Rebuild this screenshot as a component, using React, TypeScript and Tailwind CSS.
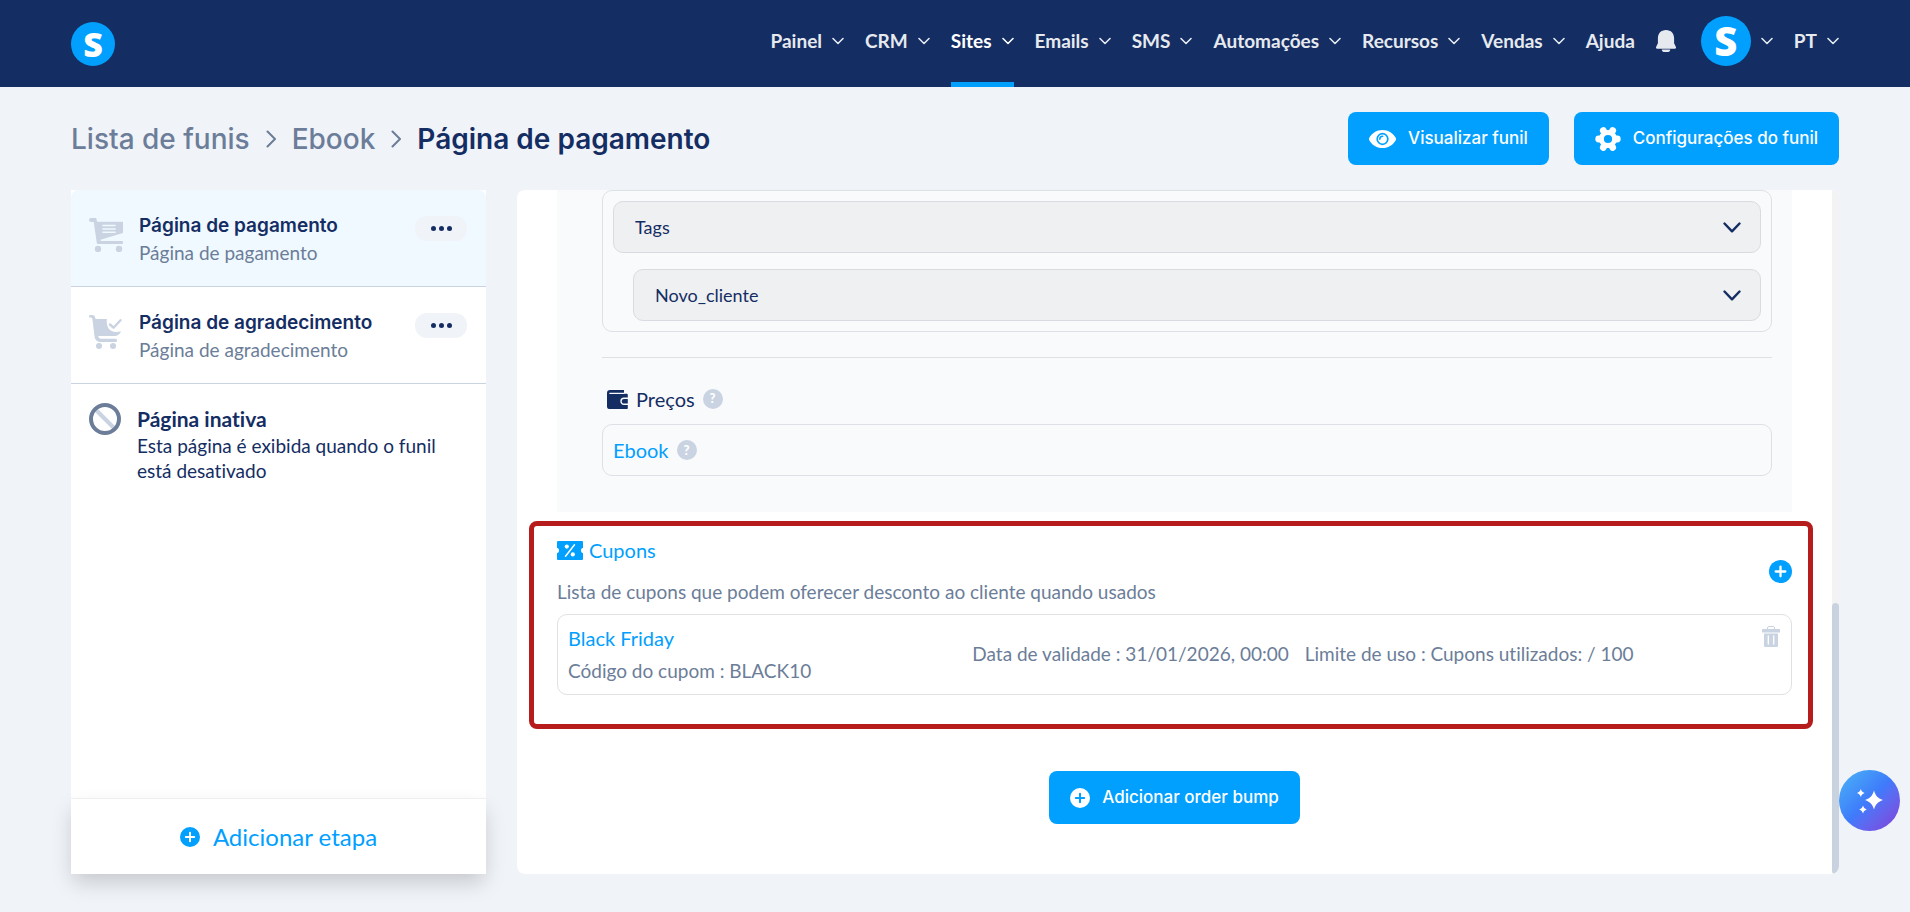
import { ReactNode } from "react"

interface IconProps {
    className? : string
}

interface NavItem {
    label : string,
    active? : boolean
}

interface StepItem {
    title : string,
    subtitle : string,
    icon : ReactNode,
    selected? : boolean
}

const navItems : NavItem[] = [
    { label: "Painel" },
    { label: "CRM" },
    { label: "Sites", active: true },
    { label: "Emails" },
    { label: "SMS" },
    { label: "Automações" },
    { label: "Recursos" },
    { label: "Vendas" },
]

const ChevronDown = ({ className } : IconProps) => (
    <svg viewBox="0 0 12 8" className={className} fill="none" stroke="currentColor" strokeWidth="1.6" strokeLinecap="round" strokeLinejoin="round">
        <path d="M1 1.5 6 6.5 11 1.5" />
    </svg>
)

const ChevronRight = () => (
    <svg viewBox="0 0 10 18" className="h-[18px] w-[10px]" fill="none" stroke="currentColor" strokeWidth="2" strokeLinecap="round" strokeLinejoin="round">
        <path d="M1.5 1.5 9 9 1.5 16.5" />
    </svg>
)

const BellIcon = () => (
    <svg viewBox="0 0 20 22" className="h-[22px] w-5" fill="currentColor">
        <path d="M10 0C5 0 1.9 3.6 1.9 8v5.2L.3 16.4c-.7 1.4-.3 2.3 1 2.3h17.4c1.3 0 1.7-.9 1-2.3l-1.6-3.2V8C18.1 3.6 15 0 10 0Z" />
        <path d="M5.8 19.6h8.4c0 1.5-.9 2.4-2 2.4H7.8c-1.1 0-2-.9-2-2.4Z" />
    </svg>
)

const EyeIcon = () => (
    <svg viewBox="0 0 27 18" className="h-[18px] w-[27px]">
        <path d="M13.5 0C7.5 0 2.6 3.4.3 7.8a2.4 2.4 0 0 0 0 2.4C2.6 14.6 7.5 18 13.5 18s10.9-3.4 13.2-7.8a2.4 2.4 0 0 0 0-2.4C24.4 3.4 19.5 0 13.5 0Z" fill="#fff" />
        <circle cx="13.5" cy="9" r="5.3" fill="none" stroke="#01a0ff" strokeWidth="1.7" />
        <path d="M10.8 9.2a2.9 2.9 0 0 1 2.9-2.9" fill="none" stroke="#01a0ff" strokeWidth="1.5" strokeLinecap="round" />
    </svg>
)

const GearIcon = () => (
    <svg viewBox="0 0 26 26" className="size-[26px]" fill="none" stroke="currentColor">
        <circle cx="13" cy="13" r="6.6" strokeWidth="5" />
        <g strokeWidth="6.8" strokeLinecap="round">
            <path d="M3.7 13h1M21.3 13h1" />
            <path d="M8.3 4.5l.5 1M17.2 20.5l.5 1" />
            <path d="M17.7 4.5l-.5 1M8.8 20.5l-.5 1" />
        </g>
    </svg>
)

const PlusCircle = ({ className } : IconProps) => (
    <svg viewBox="0 0 20 20" className={className}>
        <circle cx="10" cy="10" r="10" fill="currentColor" stroke="none" />
        <path d="M10 5.8v8.4M5.8 10h8.4" strokeWidth="2" strokeLinecap="round" />
    </svg>
)

const CartListIcon = () => (
    <svg viewBox="0 0 34 34" className="size-[34px]" fill="#c9d3e1">
        <path d="M2 0h5.2l.9 3.8H34V15L11.5 21.8l.3 1.2h21a1.5 1.5 0 0 1 0 3H9.5c-1 0-1.7-.5-1.8-1.5L4.8 4H2a2 2 0 0 1 0-4Z" />
        <circle cx="9" cy="31" r="3.2" />
        <circle cx="30" cy="31" r="3.2" />
        <path d="M14 7.5h12M14 11h12M14 14.3h12" stroke="#f0f9ff" strokeWidth="1.6" strokeLinecap="round" />
    </svg>
)

const CartCheckIcon = () => (
    <svg viewBox="0 0 34 34" className="size-[34px]" fill="#c9d3e1">
        <path d="M1.2 0H3c1.8 0 2.9 1 3.2 2.7L6.5 4H18c-.6 2-.5 8 3 11 3.5 2.6 7.6 2.4 11 1.3-1 3-3.5 4.7-6.5 4.7H9.2c.4 1.7 1.3 2.8 3 2.8h14.3a1.5 1.5 0 0 1 0 3.2H11.5c-3.5 0-5.500-2.5-6-5.5L3.5 4.5C3.3 3 2.8 2.5 1.2 2.5a1.2 1.2 0 0 1 0-2.5Z" />
        <circle cx="10" cy="31" r="3" />
        <circle cx="24" cy="31" r="3" />
        <path d="M21 9.5l3.5 3.2 7-7.5" fill="none" stroke="#c9d3e1" strokeWidth="2.4" strokeLinecap="round" strokeLinejoin="round" />
    </svg>
)

const BanIcon = () => (
    <svg viewBox="0 0 32 32" className="size-8" fill="none">
        <path d="M7 7 25 25" stroke="#c9d3e1" strokeWidth="4" />
        <circle cx="16" cy="16" r="14" stroke="#6b7d98" strokeWidth="4" />
    </svg>
)

const WalletIcon = () => (
    <svg viewBox="0 0 21 19" className="h-[19px] w-[21px]">
        <path d="M3 0h14v3.8h2.5c.8 0 1.3.5 1.3 1.2V18c0 .6-.4 1-1 1H2.5A2.3 2.3 0 0 1 0 16.7V3a3 3 0 0 1 3-3Z" fill="#142d63" />
        <path d="M2.8 3.3H17" stroke="#f9fafc" strokeWidth="1.3" strokeLinecap="round" />
        <path d="M21 8.3h-4a3 3 0 0 0 0 6h4" fill="none" stroke="#f9fafc" strokeWidth="1.4" />
    </svg>
)

const TicketIcon = () => (
    <svg viewBox="0 0 26 19" className="h-[19px] w-[26px]">
        <path d="M1 0h24a1 1 0 0 1 1 1v5.7a2.9 2.9 0 0 0 0 5.6V18a1 1 0 0 1-1 1H1a1 1 0 0 1-1-1v-5.7a2.9 2.9 0 0 0 0-5.6V1a1 1 0 0 1 1-1Z" fill="#01a0ff" />
        <path d="M17.5 3.8 8.5 15.2" stroke="#fff" strokeWidth="1.5" strokeLinecap="round" />
        <circle cx="9.8" cy="5.6" r="2.1" fill="#fff" />
        <circle cx="15.8" cy="13.4" r="2.1" fill="#fff" />
    </svg>
)

const TrashIcon = () => (
    <svg viewBox="0 0 18 21" className="h-[21px] w-[18px]" fill="#c9d3e1">
        <path d="M5.5 3.5V2A1.5 1.5 0 0 1 7 .5h4A1.5 1.5 0 0 1 12.5 2v1.5" fill="none" stroke="#c9d3e1" />
        <path d="M.5 3h17a.5.5 0 0 1 .5.5v3H0v-3A.5.5 0 0 1 .5 3Z" />
        <path d="M2 7.5h14V20a1 1 0 0 1-1 1H3a1 1 0 0 1-1-1Z" />
        <path d="M6.3 10v8M11.7 10v8" stroke="#fff" strokeWidth="1.3" strokeLinecap="round" />
    </svg>
)

const SparklesIcon = () => (
    <svg viewBox="0 0 26 26" className="size-[26px]" fill="#fff">
        <path d="M17 2.5c1.5 5 3.5 7.5 9 9.5-5.5 2-7.5 4.5-9 9.5-1.5-5-3.5-7.5-9-9.5 5.5-2 7.5-4.5 9-9.5Z" />
        <path d="M3.8 1c.8 2.3 1.5 3.2 3.8 4-2.3.8-3 1.7-3.8 4C3 6.7 2.3 5.8 0 5c2.3-.8 3-1.7 3.8-4Z" />
        <path d="M6 17.5c.8 2.3 1.5 3.2 3.8 4-2.3.8-3 1.7-3.8 4-.8-2.3-1.5-3.2-3.8-4 2.3-.8 3-1.7 3.8-4Z" />
    </svg>
)

const Logo = ({ className } : IconProps) => (
    <span className={`flex shrink-0 items-center justify-center rounded-full bg-[#01a0ff] font-['Open_Sans',sans-serif] leading-none font-extrabold text-white ${className}`}>S</span>
)

const HelpBadge = () => (
    <button type="button" aria-label="Saiba mais" className="flex size-5 items-center justify-center rounded-full bg-[#c9d3e1] text-[13px] font-black text-white">?</button>
)

const Header = () => {
    return (
        <header className="flex h-[87px] items-center justify-between bg-[#142d63] px-[71px]">
            <a href="#" aria-label="Início">
                <Logo className="size-11 text-[34px]" />
            </a>
            <nav className="flex h-full items-center gap-[21px] text-[19px] font-bold text-[#e6eaef]">
                {navItems.map((item) => (
                    <a
                        key={item.label}
                        href="#"
                        className={`flex h-full items-center gap-[10px] border-b-[5px] ${item.active ? "border-[#01a0ff] text-white" : "border-transparent"}`}
                    >
                        {item.label}
                        <ChevronDown className="h-2 w-3" />
                    </a>
                ))}
                <a href="#" className="flex h-full items-center border-b-[5px] border-transparent">Ajuda</a>
                <div className="flex h-full items-center gap-[21px] border-b-[5px] border-transparent">
                    <button type="button" aria-label="Notificações" className="mr-1"><BellIcon /></button>
                    <button type="button" aria-label="Conta" className="flex items-center gap-[10px]">
                        <Logo className="size-[50px] text-[40px]" />
                        <ChevronDown className="h-2 w-3" />
                    </button>
                    <button type="button" className="flex items-center gap-[10px]">
                        PT
                        <ChevronDown className="h-2 w-3" />
                    </button>
                </div>
            </nav>
        </header>
    )
}

const PageTitle = () => {
    return (
        <div className="flex h-[103px] items-center justify-between font-['Inter',sans-serif]">
            <div className="flex items-center gap-4 text-[28px] font-medium text-[#6b7d98]">
                <a href="#">Lista de funis</a>
                <ChevronRight />
                <a href="#">Ebook</a>
                <ChevronRight />
                <h1 className="font-semibold text-[#142d63]">Página de pagamento</h1>
            </div>
            <div className="flex gap-[25px] text-[17px] font-medium text-white">
                <button type="button" className="flex h-[53px] items-center gap-3 rounded-lg bg-[#01a0ff] px-[21px]">
                    <EyeIcon />
                    Visualizar funil
                </button>
                <button type="button" className="flex h-[53px] items-center gap-3 rounded-lg bg-[#01a0ff] px-[21px]">
                    <GearIcon />
                    Configurações do funil
                </button>
            </div>
        </div>
    )
}

const Step = ({ title, subtitle, icon, selected } : StepItem) => {
    return (
        <li className={`flex h-[97px] border-b border-[#c9d3e1] pt-[23px] pr-[19px] pl-[18px] ${selected ? "rounded-t-lg bg-[#f0f9ff]" : ""}`}>
            <div className="mt-[5px] w-[50px]">{icon}</div>
            <div className="flex-1">
                <div className="font-['Inter',sans-serif] text-[19px] leading-[26px] font-semibold">{title}</div>
                <div className="text-[19px] leading-[28px] text-[#6b7d98]">{subtitle}</div>
            </div>
            <button type="button" aria-label="Opções" className="mt-[3px] flex h-[25px] w-[52px] items-center justify-center gap-[3px] rounded-xl bg-[#f0f3f8]">
                <span className="size-[5px] rounded-full bg-[#142d63]" />
                <span className="size-[5px] rounded-full bg-[#142d63]" />
                <span className="size-[5px] rounded-full bg-[#142d63]" />
            </button>
        </li>
    )
}

const Sidebar = () => {
    return (
        <aside className="flex w-[415px] shrink-0 flex-col bg-white">
            <ul>
                <Step title="Página de pagamento" subtitle="Página de pagamento" icon={<CartListIcon />} selected />
                <Step title="Página de agradecimento" subtitle="Página de agradecimento" icon={<CartCheckIcon />} />
                <li className="flex pt-[19px] pr-6 pl-[18px]">
                    <div className="w-12 shrink-0"><BanIcon /></div>
                    <div className="pt-[2px]">
                        <div className="text-[21px] leading-[28px] font-bold">Página inativa</div>
                        <p className="text-[19px] leading-[25px]">Esta página é exibida quando o funil está desativado</p>
                    </div>
                </li>
            </ul>
            <button type="button" className="mt-auto flex h-[76px] items-center justify-center gap-[13px] border-t border-[#eeeff1] bg-white text-2xl text-[#01a0ff] shadow-[0_10px_20px_-2px_rgba(0,0,0,0.18)]">
                <PlusCircle className="size-5 stroke-white" />
                Adicionar etapa
            </button>
        </aside>
    )
}

const TagSelect = ({ id, value } : { id : string, value : string }) => {
    return (
        <div className="relative">
            <select id={id} aria-label={value} className="block h-[52px] w-full appearance-none rounded-[10px] border border-[#d8dbdf] bg-[#eff0f2] px-[21px] text-lg">
                <option>{value}</option>
            </select>
            <svg viewBox="0 0 18 11" className="pointer-events-none absolute top-[21px] right-5 h-[11px] w-[18px]" fill="none" stroke="#142d63" strokeWidth="2.4" strokeLinecap="round" strokeLinejoin="round">
                <path d="M1.5 1.5 9 9.3 16.5 1.5" />
            </svg>
        </div>
    )
}

const Coupons = () => {
    return (
        <section className="mt-[9px] mr-[19px] ml-3 h-[208px] rounded-lg border-[5px] border-[#b71c1c] pt-3 pr-4 pl-[23px]">
            <div className="flex items-center justify-between">
                <div>
                    <h2 className="flex items-center gap-[6px] text-xl leading-[24px] text-[#01a0ff]">
                        <TicketIcon />
                        Cupons
                    </h2>
                    <p className="mt-[18px] text-[19px] leading-[24px] text-[#6b7d98]">Lista de cupons que podem oferecer desconto ao cliente quando usados</p>
                </div>
                <button type="button" aria-label="Adicionar cupom" className="text-[#01a0ff]">
                    <PlusCircle className="size-[23px] stroke-white" />
                </button>
            </div>
            <div className="mt-[10px] flex h-[81px] items-center rounded-[10px] border border-[#e0e1e3] px-[10px] text-[19px] text-[#6b7d98]">
                <div className="w-1/3 leading-[32px]">
                    <a href="#" className="text-xl leading-[32px] text-[#01a0ff]">Black Friday</a>
                    <div>Código do cupom : BLACK10</div>
                </div>
                <div className="flex flex-1 gap-4">
                    <span>Data de validade : 31/01/2026, 00:00</span>
                    <span>Limite de uso : Cupons utilizados: / 100</span>
                </div>
                <button type="button" aria-label="Excluir cupom" className="mt-[11px] mr-[1px] self-start"><TrashIcon /></button>
            </div>
        </section>
    )
}

const Content = () => {
    return (
        <main className="flex flex-1 overflow-hidden rounded-lg bg-white">
            <div className="flex-1">
                <div className="mx-10 bg-[#f9fafc] pr-5 pb-9 pl-[45px]">
                    <div className="flex flex-col gap-4 rounded-[10px] border border-[#dde1e5] p-[10px]">
                        <TagSelect id="action" value="Tags" />
                        <div className="pl-5">
                            <TagSelect id="tag" value="Novo_cliente" />
                        </div>
                    </div>
                    <hr className="mt-[25px] border-[#dde1e5]" />
                    <div className="mt-[28px] flex items-center gap-2 pl-[5px]">
                        <WalletIcon />
                        <h2 className="text-xl leading-[26px]">Preços</h2>
                        <HelpBadge />
                    </div>
                    <div className="mt-3 flex h-[52px] items-center gap-2 rounded-[10px] border border-[#dde1e5] px-[10px] text-xl">
                        <a href="#" className="text-[#01a0ff]">Ebook</a>
                        <HelpBadge />
                    </div>
                </div>
                <Coupons />
                <div className="flex justify-center pt-[42px]">
                    <button type="button" className="flex h-[53px] items-center gap-3 rounded-lg bg-[#01a0ff] px-[21px] font-['Inter',sans-serif] text-[17px] font-medium text-white">
                        <PlusCircle className="size-5 stroke-[#01a0ff]" />
                        Adicionar order bump
                    </button>
                </div>
            </div>
            <div className="flex w-[7px] flex-col justify-end bg-[#f3f3f4]">
                <div className="h-[271px] rounded-full bg-[#c9d3df]" />
            </div>
        </main>
    )
}

export default function App() {
    return (
        <div className="flex min-h-screen flex-col bg-[#f0f3f8] font-['Lato',sans-serif] text-[#142d63] [font-variant-ligatures:none]">
            <Header />
            <div className="flex flex-1 flex-col px-[71px] pb-[38px]">
                <PageTitle />
                <div className="flex flex-1 gap-[31px]">
                    <Sidebar />
                    <Content />
                </div>
            </div>
            <button type="button" aria-label="Assistente" className="fixed right-[10px] bottom-[81px] flex size-[61px] items-center justify-center rounded-full bg-linear-135 from-[#4db4f5] via-[#3f7afb] to-[#7f3bd8]">
                <SparklesIcon />
            </button>
        </div>
    )
}
